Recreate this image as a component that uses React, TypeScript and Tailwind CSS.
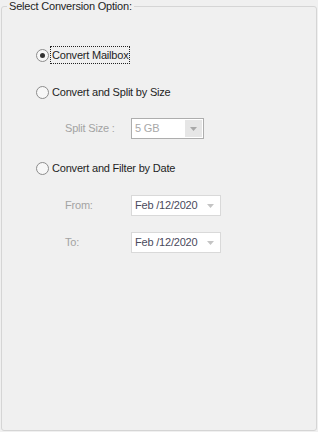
import React from "react";

const font = { fontFamily: '"Liberation Sans", Arial, sans-serif' };

const Radio = ({ checked }: { checked?: boolean }) => (
  <span className="flex h-[13px] w-[13px] shrink-0 items-center justify-center rounded-full border border-[#8c8c8c] bg-[#f7f7f7]">
    {checked && <span className="h-[5px] w-[5px] rounded-full bg-[#333]" />}
  </span>
);

const Caret = ({ color }: { color: string }) => (
  <svg width="7" height="4" viewBox="0 0 7 4">
    <path d="M0 0h7L3.5 4z" fill={color} />
  </svg>
);

const DateBox = () => (
  <div className="flex h-[21px] w-[90px] items-center justify-between border border-[#d9d9d9] bg-white pl-[3px] pr-[6px] text-[11px] text-[#4a4a5c]">
    <span>Feb /12/2020</span>
    <Caret color="#c4c4c4" />
  </div>
);

export default function App() {
  return (
    <div
      className="h-[432px] w-[318px] bg-[#f0f0f0] pl-px pt-[6px] tracking-[-0.2px]"
      style={font}
    >
      <div className="relative h-[425px] w-[316px] rounded-[3px] border border-[#d5d5d5] pt-[39px]">
        <span className="absolute left-[5px] top-[-8px] bg-[#f0f0f0] px-[2px] text-[11px] leading-[14px] text-[#1e1e1e]">
          Select Conversion Option:
        </span>

        <div className="flex flex-col pl-[34px] text-[11px] text-[#1e1e1e]">
          <div className="flex h-[18px] items-center gap-[1px]">
            <Radio checked />
            <span className="border border-dotted border-[#222] px-px leading-[16px]">
              Convert Mailbox
            </span>
          </div>

          <div className="mt-[19px] flex h-[18px] items-center gap-[3px]">
            <Radio />
            <span>Convert and Split by Size</span>
          </div>

          <div className="mt-[17px] flex h-[21px] items-center pl-[29px]">
            <span className="w-[66px] text-[#a3a3a3]">Split Size :</span>
            <div className="flex h-[21px] w-[73px] items-stretch border border-[#adadad] bg-white">
              <span className="flex flex-1 items-center pl-[3px] text-[#a8a8a8]">5 GB</span>
              <span className="m-px flex w-[17px] items-center justify-center bg-[#e6e6e6]">
                <Caret color="#a8a8a8" />
              </span>
            </div>
          </div>

          <div className="mt-[20px] flex h-[18px] items-center gap-[3px]">
            <Radio />
            <span>Convert and Filter by Date</span>
          </div>

          <div className="mt-[18px] flex h-[21px] items-center pl-[29px]">
            <span className="w-[66px] text-[#a3a3a3]">From:</span>
            <DateBox />
          </div>

          <div className="mt-[16px] flex h-[21px] items-center pl-[29px]">
            <span className="w-[66px] text-[#a3a3a3]">To:</span>
            <DateBox />
          </div>
        </div>
      </div>
    </div>
  );
}
